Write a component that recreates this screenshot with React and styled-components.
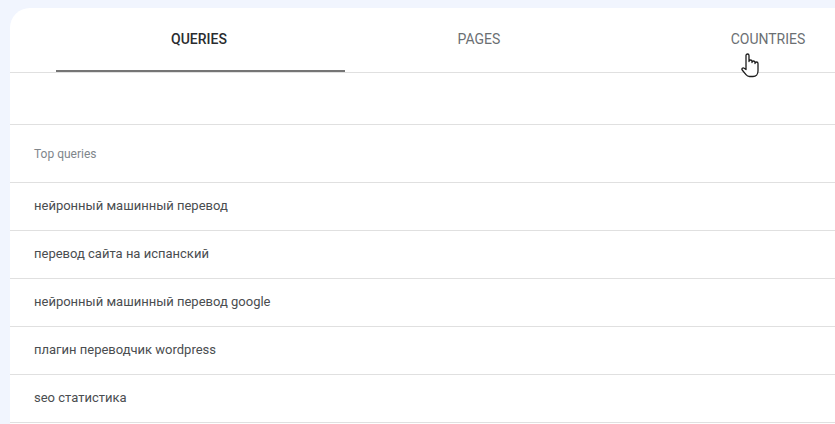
import React from 'react';
import styled, { createGlobalStyle } from 'styled-components';

const GlobalStyle = createGlobalStyle`
  html, body {
    margin: 0;
    padding: 0;
    height: 100%;
    overflow: hidden;
    background: #f1f5fe;
    font-family: Roboto, "Liberation Sans", sans-serif;
  }
`;

const S = {
  Page: styled.div`
    position: relative;
    width: 835px;
    height: 424px;
    padding: 8px 0 0 10px;
    box-sizing: border-box;
    overflow: hidden;
  `,
  Card: styled.div`
    width: 825px;
    height: 416px;
    background: #fff;
    border-radius: 20px 0 0 0;
    overflow: hidden;
  `,
  Tabs: styled.div`
    display: flex;
    height: 64px;
    padding-left: 46px;
    border-bottom: 1px solid #e0e0e0;
  `,
  Tab: styled.div`
    position: relative;
    width: ${props => props.$width}px;
    flex: none;
    padding: 23px ${props => (props.$active ? 3 : 0)}px 0 0;
    box-sizing: border-box;
    text-align: center;
    font-size: 14px;
    line-height: 16px;
    font-weight: ${props => (props.$active ? 500 : 400)};
    color: ${props => props.$color};
    ${props => props.$active && `
      &::after {
        content: '';
        position: absolute;
        left: 0;
        right: 0;
        bottom: 0;
        height: 2px;
        background: #757575;
      }
    `}
  `,
  Spacer: styled.div`
    height: 51px;
    border-bottom: 1px solid #e0e0e0;
  `,
  HeadRow: styled.div`
    height: 57px;
    padding-left: 24px;
    display: flex;
    align-items: center;
    font-size: 12px;
    color: #80868b;
    border-bottom: 1px solid #e0e0e0;
  `,
  Row: styled.div`
    height: 45px;
    padding: 0 0 2px 24px;
    display: flex;
    align-items: center;
    font-size: 13px;
    line-height: 16px;
    color: #4a4d50;
    border-bottom: 1px solid #e0e0e0;
  `,
  Cursor: styled.svg`
    position: absolute;
    left: 741px;
    top: 53px;
  `,
};

const queries = [
  'нейронный машинный перевод',
  'перевод сайта на испанский',
  'нейронный машинный перевод google',
  'плагин переводчик wordpress',
  'seo статистика',
];

const App = () => (
  <S.Page>
    <GlobalStyle />
    <S.Card>
      <S.Tabs>
        <S.Tab $active $width={289} $color="#2a2c2f">QUERIES</S.Tab>
        <S.Tab $width={268} $color="#6b6f73">PAGES</S.Tab>
        <S.Tab $width={310} $color="#6b6f73">COUNTRIES</S.Tab>
      </S.Tabs>
      <S.Spacer />
      <S.HeadRow>Top queries</S.HeadRow>
      {queries.map(q => <S.Row key={q}>{q}</S.Row>)}
    </S.Card>
    <S.Cursor width="19" height="25" viewBox="0 0 19 25">
      <path
        d="M5 2.5a1.5 1.5 0 0 1 3 0V8.5a1.5 1.5 0 0 1 3 0V9.5a1.5 1.5 0 0 1 3 0V10.5a1.5 1.5 0 0 1 3 0V18c0 3.2-2 5.5-5 5.5H8.5c-1.6 0-2.6-.7-3.5-1.8L1.2 17c-.9-1.3.6-2.8 2-1.8L5 16.5z"
        fill="#fff"
        stroke="#1c1c1c"
        strokeWidth="1.3"
        strokeLinejoin="round"
      />
    </S.Cursor>
  </S.Page>
);

export default App;
